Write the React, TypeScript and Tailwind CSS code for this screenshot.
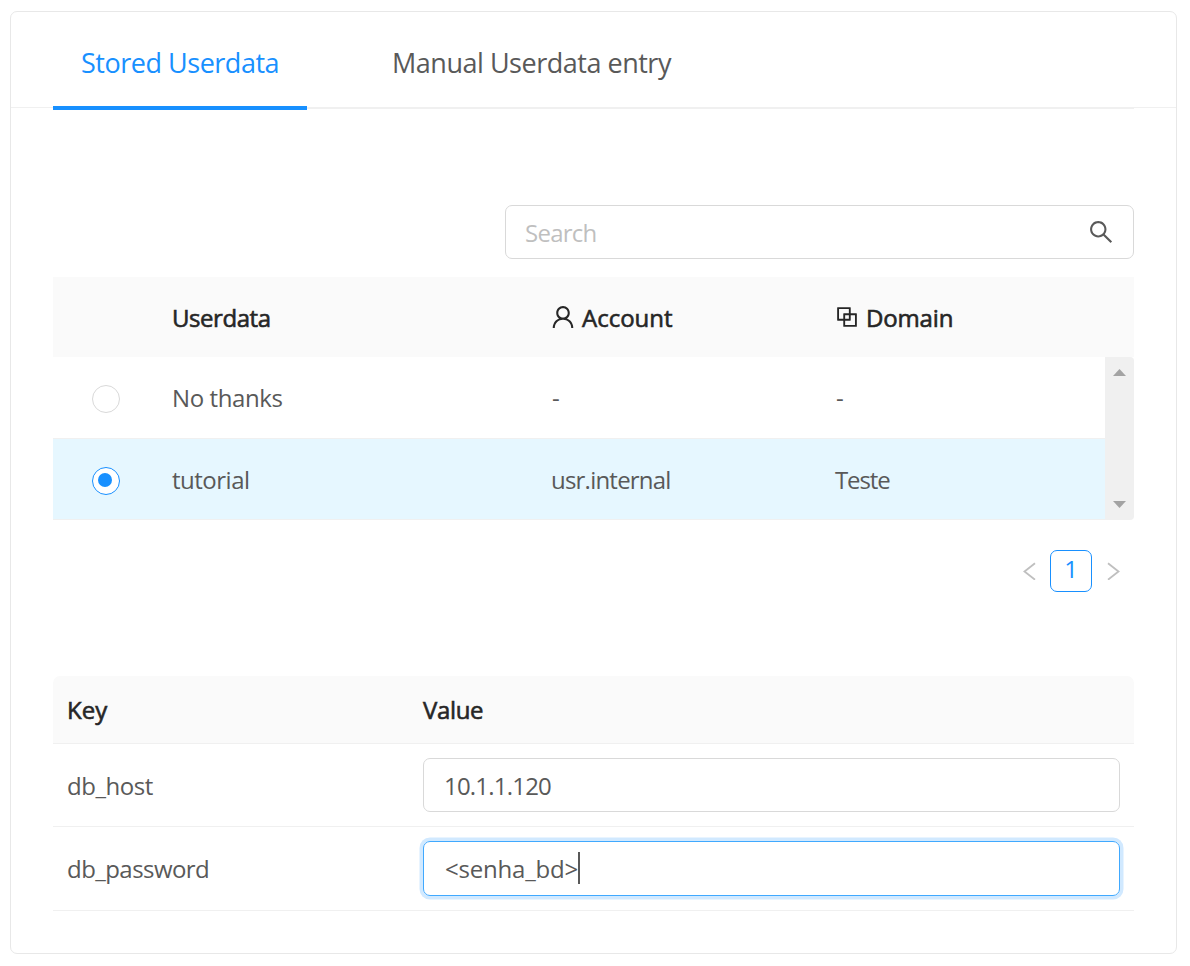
import type { ReactNode } from "react";
import { AiOutlineUser, AiOutlineBlock, AiOutlineSearch } from "react-icons/ai";

function Radio({ checked }: { checked?: boolean }) {
  return (
    <span
      className={
        checked
          ? "flex size-7 items-start rounded-full border border-[#1890ff] bg-white pt-[5px] pl-[5px]"
          : "flex size-7 rounded-full border border-[#d9d9d9] bg-white"
      }
    >
      {checked && <span className="size-3.5 rounded-full bg-[#1890ff]" />}
    </span>
  );
}

function Row({ children, className }: { children: ReactNode; className: string }) {
  return (
    <div className={`grid grid-cols-[119px_379px_284px_1fr] items-center border-b border-[#f0f0f0] ${className}`}>
      {children}
    </div>
  );
}

export default function App() {
  return (
    <div className="h-[966px] w-[1190px] bg-white pt-[11px] pl-[10px] font-['Open_Sans',sans-serif] text-[24px] leading-[36px] text-[#595959]">
      <div className="flex h-[943px] w-[1167px] flex-col rounded-[7px] border border-[#e8e8e8]">
        <div className="h-24 border-b border-[#f0f0f0] px-[42px]">
          <div className="flex h-[97px] border-b-2 border-[#f0f0f0] text-[27px]">
            <div className="flex h-[98px] w-[254px] items-center border-b-4 border-[#1890ff] pb-px pt-[9px] pl-7 text-[#1890ff]">
              <span className="whitespace-nowrap tracking-[-0.48px]">Stored Userdata</span>
            </div>
            <div className="flex h-[98px] items-center pb-[5px] pt-[9px] pl-[85px]">
              <span className="whitespace-nowrap tracking-[-0.48px]">Manual Userdata entry</span>
            </div>
          </div>
        </div>

        <div className="flex flex-col px-[42px] pt-[97px]">
          <div className="flex h-[54px] w-[629px] items-center justify-between self-end rounded-[7px] border border-[#d9d9d9] pr-[18px] pl-[19px]">
            <span className="pt-px tracking-[-0.75px] text-[#bfbfbf]">Search</span>
            <AiOutlineSearch size={28} className="text-[#595959]" />
          </div>

          <div className="mt-[18px] grid h-20 grid-cols-[119px_379px_284px_1fr] items-center bg-[#fafafa] text-[#262626]">
            <span />
            <span className="pt-0.5 tracking-[-0.45px] [-webkit-text-stroke:0.6px_#262626]">Userdata</span>
            <span className="flex items-center gap-[5px] pl-0.5">
              <AiOutlineUser size={28} className="-ml-1" />
              <span className="pt-0.5 [-webkit-text-stroke:0.6px_#262626]">Account</span>
            </span>
            <span className="flex items-center gap-[5px] pl-px">
              <AiOutlineBlock size={28} className="-ml-[3px]" />
              <span className="pt-0.5 tracking-[-0.15px] [-webkit-text-stroke:0.6px_#262626]">Domain</span>
            </span>
          </div>

          <div className="flex">
            <div className="w-[1052px]">
              <Row className="h-[82px]">
                <span className="pl-[39px] pt-[3px]"><Radio /></span>
                <span className="tracking-[-0.4px]">No thanks</span>
                <span className="pl-px">-</span>
                <span className="pl-px">-</span>
              </Row>
              <Row className="h-[81px] bg-[#e6f7ff]">
                <span className="pl-[39px] pt-1"><Radio checked /></span>
                <span className="pt-0.5 tracking-[-0.5px]">tutorial</span>
                <span className="pt-0.5 tracking-[-0.78px]">usr.internal</span>
                <span className="pt-0.5 tracking-[-1.1px]">Teste</span>
              </Row>
            </div>
            <div className="flex w-[29px] flex-col items-center justify-between rounded-r-sm bg-[#f0f0f0] py-3">
              <svg width="13" height="7" viewBox="0 0 13 7" fill="#a3a3a3"><path d="M0 7 6.5 0 13 7z" /></svg>
              <svg width="13" height="7" viewBox="0 0 13 7" fill="#a3a3a3"><path d="M0 0 6.5 7 13 0z" /></svg>
            </div>
          </div>

          <div className="mt-[30px] flex h-[42px] items-center justify-end pr-[14px]">
            <svg width="13" height="18" viewBox="0 0 13 18" fill="none" stroke="#bfbfbf" strokeWidth="1.8"><path d="M12 1.3 1.5 9.5 12 17.7" /></svg>
            <span className="mr-[15px] ml-[14px] flex size-[42px] justify-center rounded-[7px] border border-[#1890ff] text-[#1890ff]">1</span>
            <svg width="13" height="18" viewBox="0 0 13 18" fill="none" stroke="#bfbfbf" strokeWidth="1.8"><path d="M1 1.3 11.5 9.5 1 17.7" /></svg>
          </div>

          <div className="mt-[84px] grid h-[68px] grid-cols-[356px_1fr] items-center rounded-t-[7px] border-b border-[#f0f0f0] bg-[#fafafa] pl-[14px] text-[#262626] [-webkit-text-stroke:0.6px_#262626]">
            <span>Key</span>
            <span className="tracking-[-0.35px]">Value</span>
          </div>
          <div className="grid h-[83px] grid-cols-[356px_1fr] items-center border-b border-[#f0f0f0] px-[14px]">
            <span className="pt-0.5 tracking-[-0.45px]">db_host</span>
            <div className="flex h-[54px] items-center rounded-[7px] border border-[#d9d9d9] pl-5">
              <span className="pt-0.5 tracking-[-0.8px]">10.1.1.120</span>
            </div>
          </div>
          <div className="grid h-[84px] grid-cols-[356px_1fr] items-center border-b border-[#f0f0f0] px-[14px]">
            <span className="tracking-[-0.55px]">db_password</span>
            <div className="flex h-[55px] items-center rounded-[7px] border border-[#40a9ff] pl-[21px] shadow-[0_0_0_3.5px_rgba(24,144,255,0.2)]">
              <span className="tracking-[-0.2px]">&lt;senha_bd&gt;</span>
              <span className="mb-0.5 h-8 w-0.5 bg-[#595959]" />
            </div>
          </div>
        </div>
      </div>
    </div>
  );
}
